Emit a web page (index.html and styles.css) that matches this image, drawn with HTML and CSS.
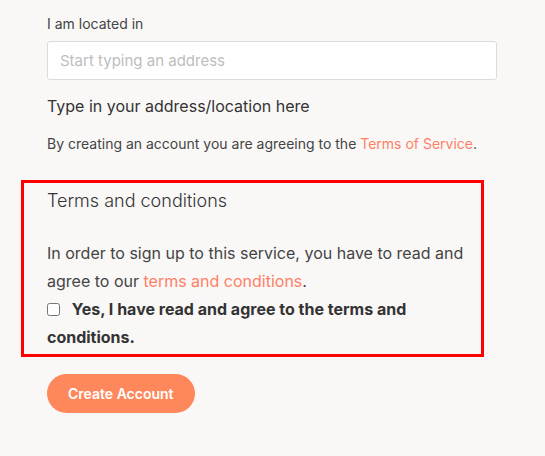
FILE: index.html
```html
<!DOCTYPE html>
<html>
<head>
<meta charset="utf-8">
<link rel="stylesheet" href="styles.css">
</head>
<body>
<div class="page">
  <div class="field">
    <label class="label">I am located in</label>
    <input class="input" type="text" placeholder="Start typing an address">
    <p class="help">Type in your address/location here</p>
    <p class="agree">By creating an account you are agreeing to the <a href="#">Terms of Service</a>.</p>
  </div>
  <section class="terms">
    <h3 class="terms-title">Terms and conditions</h3>
    <p class="terms-text">In order to sign up to this service, you have to read and agree to our <a href="#">terms and conditions</a>.</p>
    <label class="check"><input type="checkbox" class="box"> Yes, I have read and agree to the terms and conditions.</label>
  </section>
  <div class="field">
    <button class="btn">Create Account</button>
  </div>
</div>
</body>
</html>
```
FILE: styles.css
```css
html, body {
  margin: 0;
  padding: 0;
  background: #f9f8f7;
}
body {
  font-family: Inter, "Open Sans", sans-serif;
  color: #3a3a3a;
}
.page {
  padding: 14px 0 0 21px;
}
.field {
  margin-left: 26px;
  width: 450px;
}
.label {
  display: block;
  font-size: 14px;
  line-height: 20px;
  color: #444;
}
.input {
  display: block;
  box-sizing: border-box;
  width: 450px;
  height: 39px;
  margin-top: 7px;
  padding: 0 12px;
  border: 1px solid #dcdcdc;
  border-radius: 3px;
  background: #fff;
  font-family: inherit;
  font-size: 15px;
  color: #333;
}
.input::placeholder {
  color: #bdbdbd;
}
.help {
  margin: 15px 0 0;
  font-size: 16px;
  line-height: 22px;
  color: #333;
}
.agree {
  margin: 17px 0 0;
  font-size: 14px;
  line-height: 20px;
  color: #444;
}
a {
  color: #ff8066;
  text-decoration: none;
}
.terms {
  width: 463px;
  margin-top: 26px;
  padding: 6px 0 3px 23px;
  box-sizing: border-box;
  border: 3px solid #ff0000;
}
.terms-title {
  margin: 0;
  font-size: 18px;
  font-weight: 300;
  line-height: 24px;
  color: #333;
}
.terms-text {
  margin: 26px 0 0;
  font-size: 16px;
  line-height: 28px;
  color: #444;
  width: 420px;
}
.check {
  display: block;
  font-size: 16px;
  font-weight: 700;
  line-height: 28px;
  color: #333;
  width: 420px;
}
.box {
  width: 13px;
  height: 13px;
  margin: 0 8px 0 0;
  vertical-align: -1px;
}
.btn {
  margin-top: 17px;
  height: 39px;
  padding: 0 21px;
  border: none;
  border-radius: 20px;
  background: #ff875c;
  color: #fff;
  font-family: inherit;
  font-size: 14px;
  font-weight: 600;
}
```
